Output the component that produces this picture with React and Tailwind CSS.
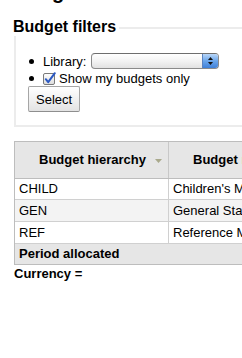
import React from "react";

function Bullet() {
  return <span className="block w-[5px] h-[5px] rounded-full bg-black shrink-0" />;
}

function AquaSelect() {
  return (
    <div className="ml-[5px] w-[128px] h-[16px] rounded-[4px] border border-[#8a8a8a] border-t-[#6e6e6e] bg-gradient-to-b from-[#ffffff] via-[#f3f3f3] to-[#e2e2e2] flex justify-end overflow-hidden">
      <div className="w-[16px] h-full bg-gradient-to-b from-[#b9d6f7] via-[#6aa5ea] to-[#3f80d8] border-l border-[#5a83c0] flex items-center justify-center">
        <svg width="7" height="10" viewBox="0 0 7 10">
          <polygon points="3.5,1 6,4 1,4" fill="#111" />
          <polygon points="1,6 6,6 3.5,9" fill="#111" />
        </svg>
      </div>
    </div>
  );
}

function Checkbox() {
  return (
    <svg width="14" height="13" viewBox="0 0 14 13" className="shrink-0">
      <defs>
        <linearGradient id="cbg" x1="0" y1="0" x2="0" y2="1">
          <stop offset="0" stopColor="#ffffff" />
          <stop offset="1" stopColor="#dcdcdc" />
        </linearGradient>
      </defs>
      <rect x="0.5" y="1.5" width="11" height="11" rx="1.5" fill="url(#cbg)" stroke="#7a7a7a" />
      <path d="M2.8 7.2 L5.2 10.2 L11.8 1.2" fill="none" stroke="#2b59c3" strokeWidth="2" strokeLinecap="round" strokeLinejoin="round" />
    </svg>
  );
}

export default function App() {
  return (
    <div className="w-[242px] h-[358px] overflow-hidden bg-white text-black text-[13px] font-['Liberation_Sans',Arial,sans-serif]">
      <div className="w-[320px] pl-[14px]">
        {/* clipped page heading */}
        <div className="h-[4px] overflow-hidden -ml-px">
          <div className="mt-[-19px] text-[20px] leading-[23px] font-bold whitespace-nowrap">
            Budgets administration
          </div>
        </div>

        {/* fieldset */}
        <div className="mt-[23px] border-2 border-[#ececec] pb-[13px]">
          <div className="-mt-[11px] -ml-[3px] w-fit bg-white pr-[3px] text-[16px] leading-[18px] font-bold whitespace-nowrap">
            Budget filters
          </div>
          <div className="mt-[16px] pl-[13px] flex flex-col">
            <div className="h-[18px] flex items-center">
              <Bullet />
              <span className="ml-[9px] leading-[15px]">Library:</span>
              <AquaSelect />
            </div>
            <div className="h-[16px] flex items-center">
              <Bullet />
              <span className="ml-[9px] flex items-center">
                <Checkbox />
                <span className="ml-[2px] leading-[15px] whitespace-nowrap">Show my budgets only</span>
              </span>
            </div>
          </div>
          <div className="ml-[12px]">
            <button className="h-[26px] px-[7px] border border-[#a6a6a6] border-b-[#8e8e8e] rounded-[2px] bg-gradient-to-b from-[#ffffff] to-[#e3e3e3] text-[13px] leading-[15px] text-black">
              Select
            </button>
          </div>
        </div>

        {/* table */}
        <div className="mt-[14px] border border-[#bdbdbd] border-r-0">
          <div className="h-[37px] flex bg-[#e6e6e6] border-b border-[#bdbdbd] font-bold">
            <div className="w-[154px] border-r border-[#c8c8c8] flex items-center pl-[24px]">
              <span className="whitespace-nowrap">Budget hierarchy</span>
              <svg width="7" height="4" viewBox="0 0 7 4" className="ml-[9px] mt-[2px]">
                <polygon points="0,0 7,0 3.5,4" fill="#a9a98c" />
              </svg>
            </div>
            <div className="flex-1 flex items-center pl-[24px] whitespace-nowrap">Budget name</div>
          </div>
          {[
            ["CHILD", "Children's Materials", "bg-white", "h-[21px]"],
            ["GEN", "General Stacks", "bg-[#f3f3f3]", "h-[22px]"],
            ["REF", "Reference Materials", "bg-white", "h-[22px]"],
          ].map(([code, name, bg, h]) => (
            <div key={code} className={`${h} ${bg} flex border-b border-[#d0d0d0]`}>
              <div className="w-[154px] border-r border-[#d0d0d0] flex items-center pl-[4px]">{code}</div>
              <div className="flex-1 flex items-center pl-[4px] whitespace-nowrap">{name}</div>
            </div>
          ))}
          <div className="h-[20px] bg-[#e6e6e6] flex items-center pl-[4px] font-bold">Period allocated</div>
        </div>
        <div className="mt-[1px] font-bold leading-[16px]">Currency =</div>
      </div>
    </div>
  );
}
